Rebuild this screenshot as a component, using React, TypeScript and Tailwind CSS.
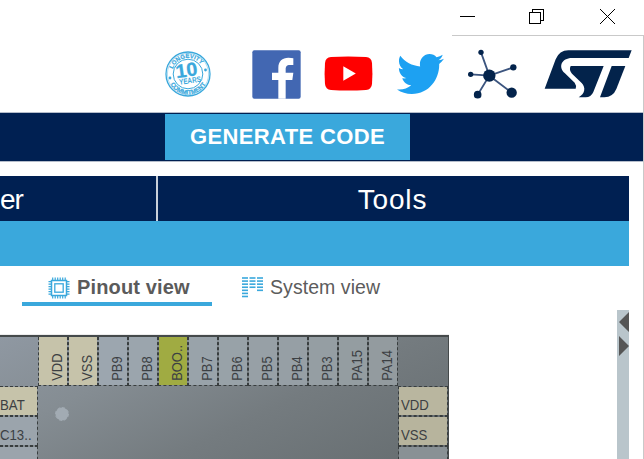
import React from "react";

const TOP_PINS = [
  { name: "VDD", bg: "bg-[#c6c3aa]" },
  { name: "VSS", bg: "bg-[#c6c3aa]" },
  { name: "PB9", bg: "bg-[#9ca6af]" },
  { name: "PB8", bg: "bg-[#9ba5ad]" },
  { name: "BOO..", bg: "bg-[#a0ab42]" },
  { name: "PB7", bg: "bg-[#99a3aa]" },
  { name: "PB6", bg: "bg-[#98a2a8]" },
  { name: "PB5", bg: "bg-[#97a0a6]" },
  { name: "PB4", bg: "bg-[#969fa5]" },
  { name: "PB3", bg: "bg-[#959ea3]" },
  { name: "PA15", bg: "bg-[#949da1]" },
  { name: "PA14", bg: "bg-[#939b9f]" },
];

function WindowControls() {
  return (
    <div className="flex h-[35px] shrink-0 items-start">
      <svg className="ml-[460px] mt-[9px]" width="15" height="15" shapeRendering="crispEdges">
        <rect x="0" y="7" width="15" height="1" />
      </svg>
      <svg className="ml-[54px] mt-[9px]" width="15" height="15" fill="none" stroke="#000" shapeRendering="crispEdges">
        <path d="M.5 3.5h11v11H.5zM3.5 3V.5h11v11H12" />
      </svg>
      <svg className="ml-[56px] mt-[9px]" width="15" height="15" fill="none" stroke="#000">
        <path d="M0 0l15 15M15 0L0 15" />
      </svg>
    </div>
  );
}

function LongevityBadge() {
  return (
    <svg className="ml-[165px] mt-[15px]" width="46" height="46" viewBox="0 0 46 46">
      <g fill="none" stroke="#3aa8dc">
        <circle cx="23" cy="23" r="22" strokeWidth="1.3" />
        <circle cx="23" cy="23" r="20.6" strokeWidth=".4" />
        <circle cx="23" cy="23" r="14.8" strokeWidth="1" />
        <path id="badge-top" stroke="none" d="M7 23a16 16 0 0 1 32 0" />
        <path id="badge-bottom" stroke="none" d="M2.6 23a20.4 20.4 0 0 0 40.8 0" />
      </g>
      <g fill="#3aa8dc" fontFamily="Liberation Sans, sans-serif" fontWeight="700" textAnchor="middle">
        <text fontSize="6" stroke="#3aa8dc" strokeWidth=".2"><textPath href="#badge-top" startOffset="45%">LONGEVITY</textPath></text>
        <text fontSize="6.2" stroke="#3aa8dc" strokeWidth=".2"><textPath href="#badge-bottom" startOffset="50%">COMMITMENT</textPath></text>
        <g transform="rotate(-8 23 23)">
          <text x="22" y="25.5" fontSize="19" stroke="#3aa8dc" strokeWidth=".3" textLength="22" lengthAdjust="spacingAndGlyphs">10</text>
          <text x="24" y="32.5" fontSize="8" textLength="22" lengthAdjust="spacingAndGlyphs">YEARS</text>
        </g>
        <circle cx="5" cy="27" r="1.4" />
        <circle cx="40.5" cy="19" r="1.4" />
      </g>
    </svg>
  );
}

function SocialHeader() {
  return (
    <div className="flex h-[76px] items-start">
      <LongevityBadge />
      <svg className="ml-[41px] mt-[14px]" width="49" height="49" viewBox="306 43 147 147">
        <rect x="307" y="44" width="145" height="145" rx="6" fill="#4267b2" />
        <path fill="#fff" d="M385 189V133H366V111H385V96C385 76 397 66 415 66Q424 66 430 68V88H420C409 88 407 94 407 101V111H430L427 133H407V189Z" />
      </svg>
      <svg className="ml-[23px] mt-[20px]" width="49" height="36" viewBox="0 0 49 36">
        <path fill="#f00" d="M7 1Q24 0 42 1Q47.5 1.5 48 7Q48.8 17.5 48 28Q47.5 33.5 42 34Q24 35.2 7 34Q1.500 33.500 1 28Q.2 17.500 1 7Q1.500 1.500 7 1Z" />
        <path fill="#fff" d="M19.300 10.300L31.800 17.500L19.300 24.800Z" />
      </svg>
      <svg className="ml-[24px] mt-[18px]" width="47" height="40" viewBox="0 48 512 416" preserveAspectRatio="none">
        <path fill="#1da1f2" d="M459.37 151.716c.325 4.548.325 9.097.325 13.645 0 138.72-105.583 298.558-298.558 298.558-59.452 0-114.680-17.219-161.137-47.106 8.447.974 16.568 1.299 25.340 1.299 49.055 0 94.213-16.568 130.274-44.832-46.132-.975-84.792-31.188-98.112-72.772 6.498.974 12.995 1.624 19.818 1.624 9.421 0 18.843-1.300 27.614-3.573-48.081-9.747-84.143-51.980-84.143-102.985v-1.299c13.969 7.797 30.214 12.670 47.431 13.319-28.264-18.843-46.781-51.005-46.781-87.391 0-19.492 5.197-37.360 14.294-52.954 51.655 63.675 129.300 105.258 216.365 109.807-1.624-7.797-2.599-15.918-2.599-24.040 0-57.828 46.782-104.934 104.934-104.934 30.213 0 57.502 12.670 76.670 33.137 23.715-4.548 46.456-13.320 66.599-25.340-7.798 24.366-24.366 44.833-46.132 57.827 21.117-2.273 41.584-8.122 60.426-16.243-14.292 20.791-32.161 39.308-52.628 54.253z" />
      </svg>
      <svg className="ml-[24px] mt-[13px]" width="50" height="50" viewBox="54 147 150 150">
        <path fill="none" stroke="#3c557f" strokeWidth="5.5" d="M93 157L118 227L190 202M62 223L118 227L83 284M118 227L185 278" />
        <g fill="#03234b">
          <circle cx="93" cy="157" r="8" /><circle cx="190" cy="202" r="9.500" />
          <circle cx="62" cy="223" r="8" /><circle cx="118" cy="227" r="18.500" />
          <circle cx="83" cy="284" r="11.500" /><circle cx="185" cy="278" r="15.500" />
        </g>
      </svg>
      <svg className="ml-[26px] mt-[13px]" width="88" height="50" viewBox="282 147 264 150" fill="#03234b">
        <path d="M284 266L317 178Q328 151 355 151H545L536 174H366C334 174 324 202 344 219L374 248Q380 256 377 266Z" />
        <path d="M362 198H461L430 276Q423 292 407 292H386C405 281 408 263 395 249L366 221Q356 210 362 198Z" />
        <path d="M485 198H526L499 267Q489 291 463 292H450Z" />
      </svg>
    </div>
  );
}

function ChipIcon() {
  const legs = [4, 6.500, 9, 11.500, 14, 16.500];
  return (
    <svg className="ml-[48px] mt-[11px]" width="22" height="22" viewBox="0 0 22 22" fill="none" stroke="#3aa8dc">
      <rect x="3.500" y="3.500" width="15" height="15" strokeWidth="1.500" />
      <rect x="6.800" y="6.800" width="8.400" height="8.400" strokeWidth="1.300" />
      {legs.map((p) => (
        <path key={p} strokeWidth="1.200" d={`M${p + 0.7} .5v3M${p + 0.7} 18.500v3M.5 ${p + 0.7}h3M18.500 ${p + 0.7}h3`} />
      ))}
    </svg>
  );
}

function SystemIcon() {
  const columns = [7, 4, 5];
  return (
    <svg className="ml-[242px] mt-[11px]" width="22" height="21" fill="#3aa8dc">
      {columns.map((count, c) =>
        Array.from({ length: count }, (_, r) => (
          <rect key={`${c}-${r}`} x={c * 7.5} y={0.2 + r * 3.08} width="6" height="1.600" />
        ))
      )}
    </svg>
  );
}

function ViewTabs() {
  return (
    <div className="grid h-[69px] w-[449px] grid-cols-1 border-b border-[#ededed]">
      <div className="col-start-1 row-start-1 flex w-[212px] items-start">
        <ChipIcon />
        <span className="ml-[7px] mt-[9px] whitespace-nowrap text-[20px] font-bold leading-[24px] tracking-[0.15px] text-[#5b5b5b]">Pinout view</span>
      </div>
      <div className="col-start-1 row-start-1 flex items-start">
        <SystemIcon />
        <span className="ml-[6px] mt-[9px] whitespace-nowrap text-[19.500px] leading-[24px] tracking-[0.06px] text-[#5c5c5c]">System view</span>
      </div>
      <div className="col-start-1 row-start-1 ml-[22px] mt-[36px] h-[4px] w-[190px] bg-[#3aa8dc]" />
    </div>
  );
}

function SidePin({ name, bg, left = false }: { name: string; bg: string; left?: boolean }) {
  return (
    <div className={`flex h-[30px] shrink-0 items-center border border-dashed border-[#383d3e] bg-clip-padding ${bg} ${left ? "w-[38px] border-l-0" : "w-[50px] pl-[2px]"}`}>
      <span className="origin-left scale-x-[0.88] whitespace-nowrap pt-[7px] text-[15px] leading-[18px]">{name}</span>
    </div>
  );
}

function Chip() {
  return (
    <div className="flex h-[124px] w-[449px] flex-col border-r border-t-2 border-[#454a4b] bg-[linear-gradient(154deg,#8f98a2_0%,#858d93_28%,#747b7f_60%,#666d70_100%)] text-[#3c4043]">
      <div className="ml-[38px] flex h-[49px]">
        {TOP_PINS.map((pin) => (
          <div key={pin.name} className={`flex h-[49px] w-[30px] justify-center border-x border-b border-dashed border-[#383d3e] bg-clip-padding pl-[7px] ${pin.bg}`}>
            <span className="h-full rotate-180 scale-y-[0.86] whitespace-nowrap pt-px text-[15px] leading-[18px] [writing-mode:vertical-rl]">{pin.name}</span>
          </div>
        ))}
      </div>
      <div className="flex flex-1 justify-between">
        <div className="flex w-[38px] flex-col overflow-hidden">
          <SidePin left name="BAT" bg="bg-[#c6c3aa]" />
          <SidePin left name="C13.." bg="bg-[#9ba4ac]" />
          <SidePin left name="" bg="bg-[#9ba4ac]" />
        </div>
        <svg className="mr-auto mt-[20px] ml-[16px]" width="16" height="16">
          <circle cx="8" cy="8" r="6.500" fill="#a2abb3" stroke="#a2abb3" strokeDasharray="3 2" />
        </svg>
        <div className="flex flex-col overflow-hidden">
          <SidePin name="VDD" bg="bg-[#b9b69f]" />
          <SidePin name="VSS" bg="bg-[#b7b49d]" />
          <SidePin name="" bg="bg-[#899195]" />
        </div>
      </div>
    </div>
  );
}

export default function App() {
  return (
    <div className="flex h-[459px] w-[644px] flex-col overflow-hidden bg-white font-['Liberation_Sans',sans-serif]">
      <WindowControls />
      <div className="ml-[452px] h-px shrink-0 bg-[#c9c9c9]" />
      <main className="h-[423px] border-r border-[#c9c9c9]">
        <SocialHeader />
        <div className="flex h-[50px] items-center border-y border-[#b5bdcb] bg-[#002052]">
          <button className="ml-[165px] h-[46px] w-[245px] whitespace-nowrap bg-[#3aa8dc] pb-[2px] text-[22px] font-bold tracking-[0.38px] text-white">GENERATE CODE</button>
        </div>
        <div className="mr-[14px] mt-[14px] flex h-[45px] bg-[#002052] text-[28px] leading-[47px] text-white">
          <div className="flex w-[158px] border-r-2 border-[#c9d0da]"><span className="tracking-[-1px]">er</span></div>
          <div className="flex-1 pr-[2px] text-center tracking-[0.8px]">Tools</div>
        </div>
        <div className="mr-[14px] h-[45px] bg-[#3aa8dc]" />
        <ViewTabs />
        <div className="-mt-[25px] flex items-start justify-between">
          <div className="mt-[25px]"><Chip /></div>
          <div className="mr-[14px] h-[149px] w-[12px] bg-[#b9c5cb]">
            <svg width="12" height="48" fill="#555">
              <path d="M12 2V22L2 12ZM2 26V46L12 36Z" />
            </svg>
          </div>
        </div>
      </main>
    </div>
  );
}
